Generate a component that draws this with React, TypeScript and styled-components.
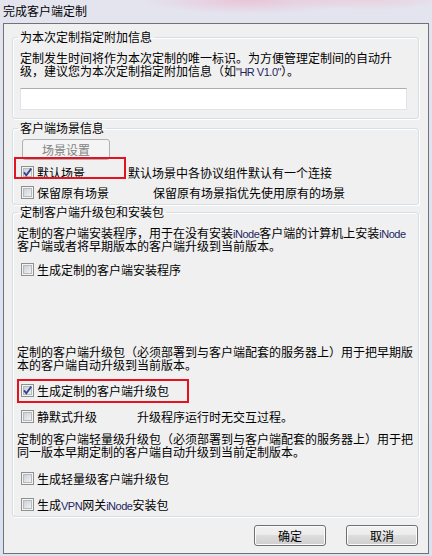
import styled, { createGlobalStyle } from 'styled-components';

const GlobalStyle = createGlobalStyle`
  html, body {
    margin: 0;
    padding: 0;
  }
  body {
    width: 432px;
    height: 556px;
    overflow: hidden;
    font-family: "Noto Sans CJK SC", "Microsoft YaHei", sans-serif;
    font-size: 12px;
    color: #000;
  }
`;

const Window = styled.div`
  width: 432px;
  height: 556px;
  box-sizing: border-box;
  padding: 0 3px 2px 3px;
  display: flex;
  flex-direction: column;
  background:
    radial-gradient(ellipse 110px 14px at 250px 0px, rgba(236, 170, 196, 0.55), transparent),
    radial-gradient(ellipse 80px 10px at 370px 0px, rgba(236, 190, 206, 0.5), transparent),
    linear-gradient(180deg, #e4e4ef 0%, #dde3f0 45%, #dbe2ef 100%);
`;

const TitleBar = styled.div`
  height: 23px;
  line-height: 22px;
  flex-shrink: 0;
  white-space: nowrap;
`;

const Frame = styled.div`
  flex: 1;
  border: 1px solid #6f7378;
  background: #f0f0f0;
  padding: 6px 9px 0 8px;
  display: flex;
  flex-direction: column;
`;

const Group = styled.fieldset<{ $pb: number; $mt: number }>`
  margin: ${(p) => p.$mt}px 0 0 0;
  padding: 0 0 ${(p) => p.$pb}px 0;
  min-width: 0;
  border: 1px solid #d5dfe5;
  border-radius: 3px;
  box-shadow: inset 1px 1px 0 #fff, 1px 1px 0 #fff;
  display: flex;
  flex-direction: column;
`;

const Legend = styled.legend`
  margin-left: 5px;
  padding: 0 2px;
  line-height: 14px;
  white-space: nowrap;
`;

const Paragraph = styled.div<{ $mt: number; $ml: number }>`
  margin-top: ${(p) => p.$mt}px;
  margin-left: ${(p) => p.$ml}px;
  line-height: 13px;
  white-space: nowrap;
`;

const Latin = styled.span`
  font-family: "Liberation Sans", Arial, sans-serif;
  font-size: 11px;
  letter-spacing: -0.5px;
  line-height: 0;
  color: #1e2660;
`;

const TextInput = styled.input`
  margin: 11px 0 0 7px;
  width: 387px;
  height: 22px;
  box-sizing: border-box;
  border: 1px solid #e2e3ea;
  border-top-color: #abadb3;
  background: #fff;
  padding: 0 3px;
  font: inherit;
  outline: none;
`;

const Button = styled.button<{ disabled?: boolean }>`
  width: 72px;
  height: 21px;
  box-sizing: border-box;
  padding: 0;
  border: 1px solid ${(p) => (p.disabled ? '#adb2b5' : '#707070')};
  border-radius: 3px;
  background: ${(p) =>
    p.disabled
      ? '#f4f4f4'
      : 'linear-gradient(180deg, #f2f2f2 0%, #ebebeb 49%, #dddddd 50%, #cfcfcf 100%)'};
  box-shadow: inset 0 0 0 1px ${(p) => (p.disabled ? '#f4f4f4' : '#fcfcfc')};
  color: ${(p) => (p.disabled ? '#838383' : '#000')};
  font: inherit;
  line-height: 19px;
`;

const SceneButton = styled(Button)`
  width: 88px;
  margin: 4px 0 0 9px;
`;

const Row = styled.div<{ $mt: number }>`
  position: relative;
  margin-top: ${(p) => p.$mt}px;
  margin-left: 8px;
  height: 13px;
  line-height: 13px;
  display: flex;
  align-items: center;
  white-space: nowrap;
`;

const Label = styled.span`
  margin-left: 3px;
  line-height: 13px;
`;

const Description = styled.span<{ $gap: number }>`
  margin-left: ${(p) => p.$gap}px;
  line-height: 13px;
`;

const RedMark = styled.div<{ $l: number; $t: number; $w: number; $h: number }>`
  position: absolute;
  left: ${(p) => p.$l}px;
  top: ${(p) => p.$t}px;
  width: ${(p) => p.$w}px;
  height: ${(p) => p.$h}px;
  box-sizing: border-box;
  border: 2px solid #e3141f;
  pointer-events: none;
`;

const ButtonBar = styled.div`
  margin-top: 8px;
  padding-right: 1px;
  display: flex;
  justify-content: flex-end;
  gap: 20px;
`;

const Check = ({ checked }: { checked?: boolean }) => (
  <svg width="13" height="13" viewBox="0 0 13 13" style={{ flexShrink: 0 }}>
    <defs>
      <linearGradient id="cbin" x1="0" y1="0" x2="1" y2="1">
        <stop offset="0" stopColor="#c9cdd3" />
        <stop offset="1" stopColor="#f3f4f5" />
      </linearGradient>
    </defs>
    <rect x="0.5" y="0.5" width="12" height="12" fill="#f4f4f4" stroke="#8e8f8f" />
    <rect x="2.5" y="2.5" width="8" height="8" fill="url(#cbin)" stroke="#b6b9be" />
    {checked && (
      <path d="M3 6.4 L5.3 9.2 L10.2 2.6" fill="none" stroke="#2f4590" strokeWidth="1.8" />
    )}
  </svg>
);

const App = () => (
  <>
    <GlobalStyle />
    <Window>
      <TitleBar>完成客户端定制</TitleBar>
      <Frame>
        <Group $pb={8} $mt={0}>
          <Legend>为本次定制指定附加信息</Legend>
          <Paragraph $mt={7} $ml={7}>
            定制发生时间将作为本次定制的唯一标识。为方便管理定制间的自动升
            <br />
            级，建议您为本次定制指定附加信息（如<Latin>"HR V1.0"</Latin>）。
          </Paragraph>
          <TextInput type="text" />
        </Group>

        <Group $pb={5} $mt={2}>
          <Legend>客户端场景信息</Legend>
          <SceneButton disabled>场景设置</SceneButton>
          <Row $mt={6}>
            <Check checked />
            <Label>默认场景</Label>
            <Description $gap={43}>默认场景中各协议组件默认有一个连接</Description>
            <RedMark $l={-7} $t={-9} $w={112} $h={22} />
          </Row>
          <Row $mt={7}>
            <Check />
            <Label>保留原有场景</Label>
            <Description $gap={44}>保留原有场景指优先使用原有的场景</Description>
          </Row>
        </Group>

        <Group $pb={5} $mt={0}>
          <Legend>定制客户端升级包和安装包</Legend>
          <Paragraph $mt={7} $ml={4}>
            定制的客户端安装程序，用于在没有安装<Latin>iNode</Latin>客户端的计算机上安装<Latin>iNode</Latin>
            <br />
            客户端或者将早期版本的客户端升级到当前版本。
          </Paragraph>
          <Row $mt={11}>
            <Check />
            <Label>生成定制的客户端安装程序</Label>
          </Row>
          <Paragraph $mt={69} $ml={4}>
            定制的客户端升级包（必须部署到与客户端配套的服务器上）用于把早期版
            <br />
            本的客户端自动升级到当前版本。
          </Paragraph>
          <Row $mt={13}>
            <Check checked />
            <Label>生成定制的客户端升级包</Label>
            <RedMark $l={-4} $t={-5} $w={172} $h={24} />
          </Row>
          <Row $mt={13}>
            <Check />
            <Label>静默式升级</Label>
            <Description $gap={40}>升级程序运行时无交互过程。</Description>
          </Row>
          <Paragraph $mt={9} $ml={4}>
            定制的客户端轻量级升级包（必须部署到与客户端配套的服务器上）用于把
            <br />
            同一版本早期定制的客户端自动升级到当前定制版本。
          </Paragraph>
          <Row $mt={14}>
            <Check />
            <Label>生成轻量级客户端升级包</Label>
          </Row>
          <Row $mt={13}>
            <Check />
            <Label>
              生成<Latin>VPN</Latin>网关<Latin>iNode</Latin>安装包
            </Label>
          </Row>
        </Group>

        <ButtonBar>
          <Button>确定</Button>
          <Button>取消</Button>
        </ButtonBar>
      </Frame>
    </Window>
  </>
);

export default App;
